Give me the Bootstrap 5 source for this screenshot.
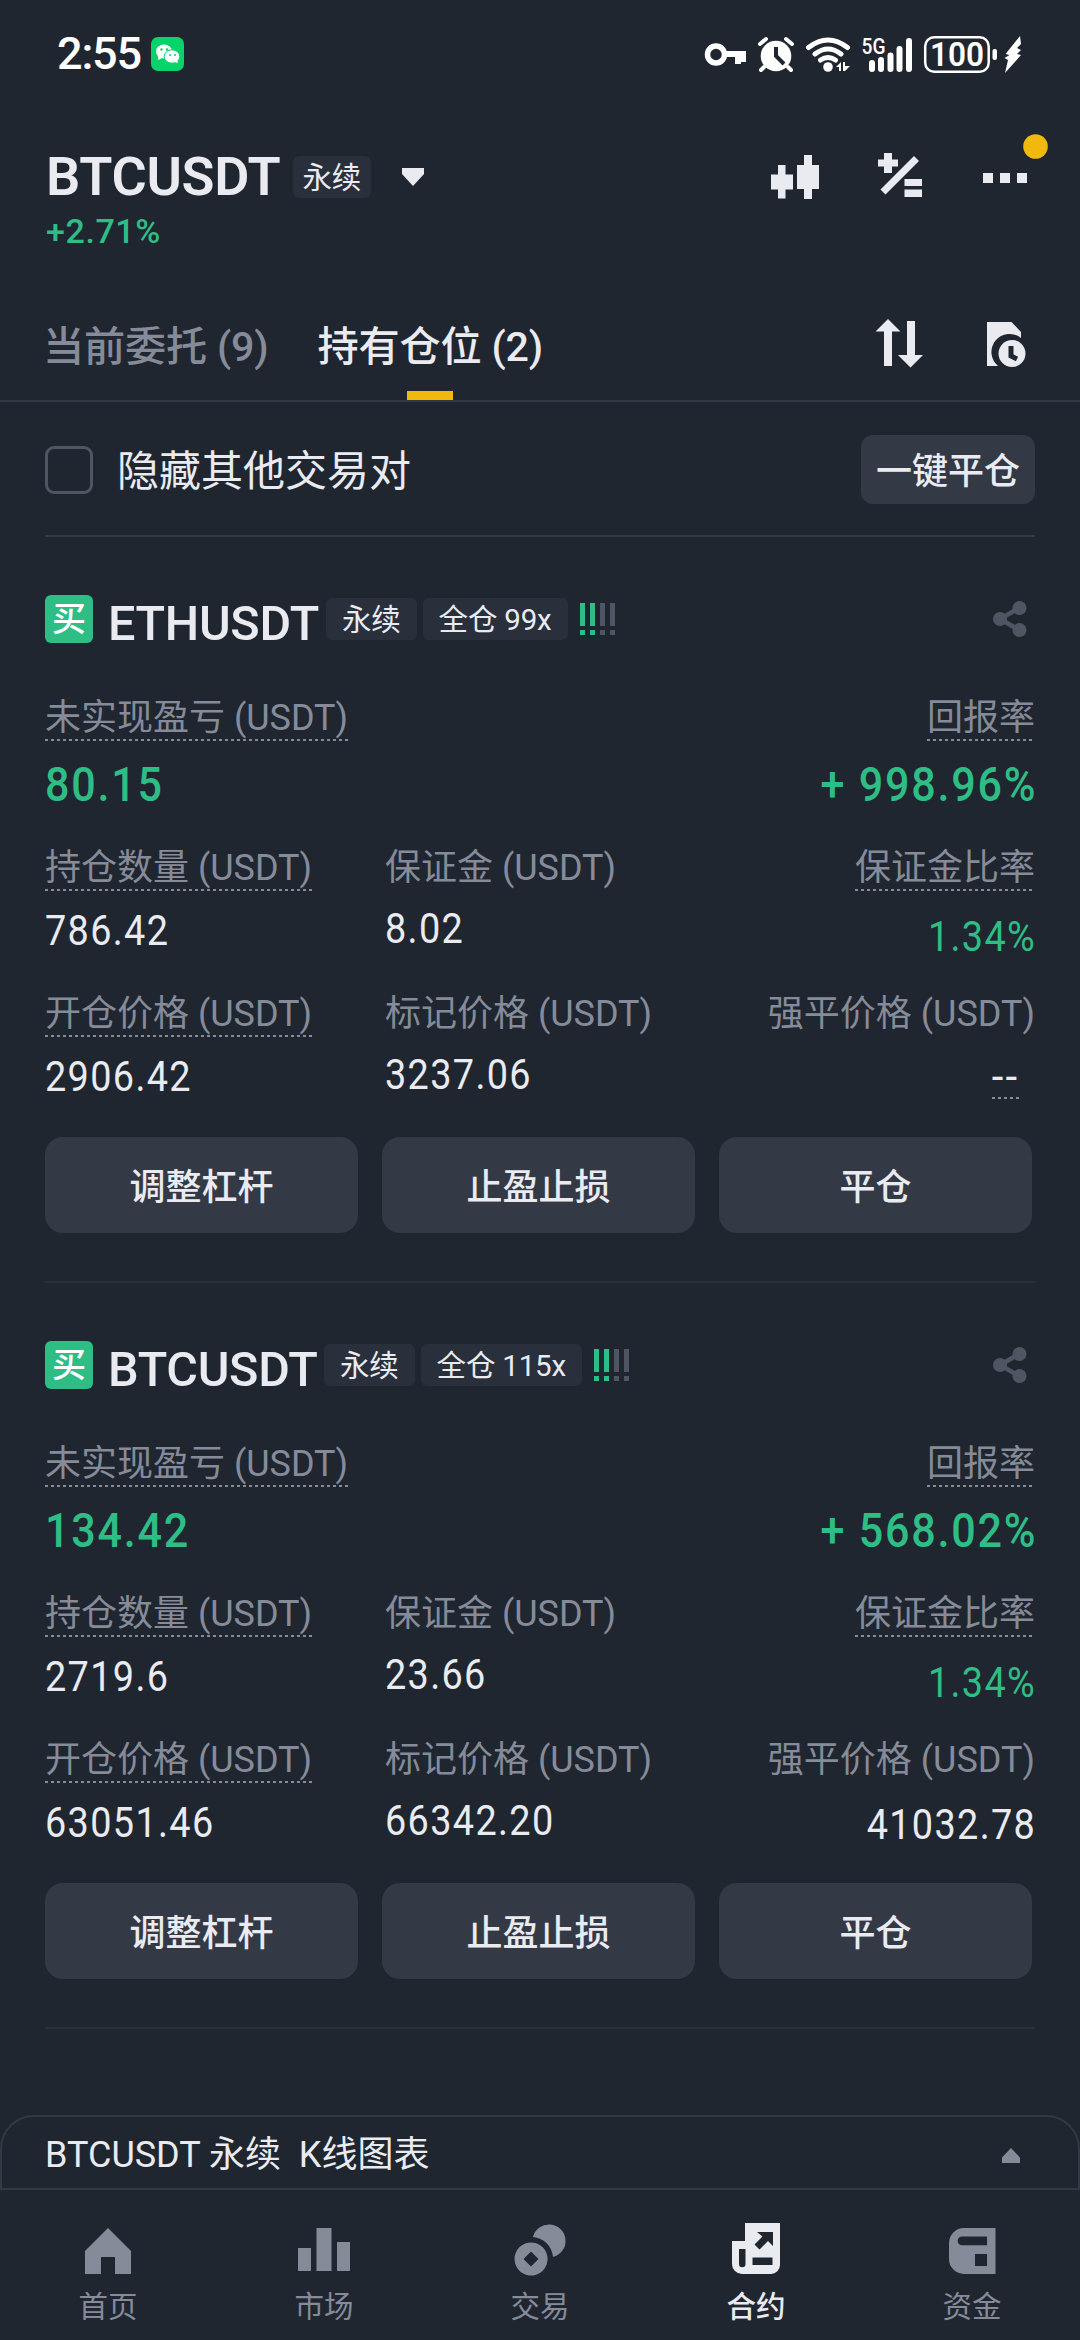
<!DOCTYPE html>
<html lang="zh-CN">
<head>
<meta charset="utf-8">
<meta name="viewport" content="width=device-width, initial-scale=1">
<title>BTCUSDT 永续</title>
<link href="https://cdn.jsdelivr.net/npm/bootstrap@5.3.0/dist/css/bootstrap.min.css" rel="stylesheet">
<style>
:root{--bg:#1f2630;--fg:#eaebf0;--dim:#868b99;--line:#333945;--mute:#4f5663;--up:#2ebd85;--gold:#f0b90b}
body{background:var(--bg);color:var(--fg);font-family:Roboto,"Noto Sans CJK SC",sans-serif;font-size:36px;line-height:1;width:1080px;height:2340px;overflow:hidden}
svg{display:block;flex:none}
.status{height:112px;padding:0 57px 4px 57px}
.clock{font-size:45px;font-weight:500;letter-spacing:-1.2px;color:#fff;line-height:52px;width:94px}
.head{height:178px;padding:35px 45px 0 46px}
.title{font-size:54px;font-weight:600;line-height:60px;letter-spacing:-.3px;width:247px}
.tagbox{background:#29303c;border-radius:6px;font-size:29.5px;height:42px;line-height:44px;padding:0 16px;white-space:pre;letter-spacing:-.2px}
.head .tagbox{padding:0 9.5px}
.pct{font-size:34px;line-height:48px;letter-spacing:.6px;font-weight:500}
.up{color:var(--up)}
.tabs{height:112px;padding:0 45px 0 43px;border-bottom:2px solid var(--line);font-size:41.2px;letter-spacing:-.2px}
.tabs .tab-item{line-height:114px;height:110px;color:var(--dim);position:relative;white-space:nowrap;font-weight:500}
.tabs .on{color:var(--fg)}
.tabs .on::after{content:"";position:absolute;left:50%;margin-left:-23px;bottom:0;width:46px;height:9px;background:var(--gold)}
.filter{margin:0 45px;height:135px;padding:33px 0 31px;border-bottom:2px solid var(--line)}
.box{width:48px;height:48px;border:3px solid var(--mute);border-radius:9px}
.soft{background:var(--line);color:var(--fg);font-size:36px;font-weight:500;border:0;padding:5px 0 0;border-radius:18px}
.all{width:174px;height:69px;border-radius:12px}
.pos{margin:0 45px;padding:58px 0 48px;height:746px;position:relative;border-bottom:2px solid #2a313b}
.side{width:48px;height:48px;background:var(--up);border-radius:6px;font-size:34px;font-weight:500;line-height:49px;text-align:center;color:#fff}
.sym{font-size:48.5px;font-weight:500;line-height:57px;height:48px;letter-spacing:-.3px;margin-left:15px}
.lab{color:var(--dim);line-height:52px;height:49px;white-space:nowrap}
.dot{background:repeating-linear-gradient(90deg,var(--dim) 0 3px,transparent 3px 6px) left bottom/100% 2px no-repeat}
.big{font-size:49px;font-weight:500;line-height:60px;margin-top:14px;letter-spacing:2px}
.big div{transform:scaleX(.88);transform-origin:0 50%}
.big div+div{transform-origin:100% 50%;margin-right:-2px}
.grid3{height:113px}
.c1{width:340px}
.val{font-size:42px;line-height:51px;height:50px;margin-top:14px;letter-spacing:1.5px;transform:scaleX(.9);transform-origin:0 50%}
.text-end .val{transform-origin:100% 50%;margin-right:-1px}
.text-end .val.nil{transform:none;height:48px;margin-right:16px;letter-spacing:2px}
.acts{gap:24px;margin-right:3px}
.acts .soft{height:96px}
.sheet{margin-top:86px;height:75px;border:2px solid var(--line);border-radius:34px 34px 0 0;padding:5px 58px 0 43px;white-space:pre}
.foot{height:150px;font-size:29.5px;color:var(--dim)}
.foot>div{width:216px;padding-top:30px}
.foot .now{color:var(--fg);font-weight:500}
.foot span{line-height:40px;margin-top:7px}
</style>
</head>
<body>
<div class="status d-flex align-items-center">
  <div class="clock">2:55</div>
  <svg width="33" height="34" viewBox="0 0 33 34"><rect width="33" height="34" rx="7" fill="#07d36a"/><ellipse cx="13" cy="14.500" rx="8" ry="7" fill="#fff"/><path d="M7 19v4l4-2z" fill="#fff"/><ellipse cx="21" cy="19.500" rx="7.800" ry="6.700" fill="#fff" stroke="#07d36a" stroke-width="1"/><path d="M26 23l1 3-4-1z" fill="#fff"/><g fill="#07d36a"><circle cx="10.500" cy="12.500" r="1.200"/><circle cx="16" cy="12.500" r="1.200"/><circle cx="19" cy="18" r="1"/><circle cx="24" cy="18" r="1"/></g></svg>
  <svg class="ms-auto" style="margin-right:-13px" width="336" height="46" viewBox="700 30 336 46" fill="#fff">
    <circle cx="716" cy="53.500" r="8.500" fill="none" stroke="#fff" stroke-width="5.500"/><path d="M726 50h20v11h-5v2h-6v-7h-9z"/>
    <circle cx="776" cy="55" r="15.300"/><path d="M764 66l-3 3M788 66l3 3M760 43l6-5M792 43l-6-5" stroke="#fff" stroke-width="4" stroke-linecap="round"/><path d="M776 46v9l8 8" fill="none" stroke="#1f2630" stroke-width="4"/>
    <g fill="none" stroke="#fff" stroke-width="5" stroke-linecap="round"><path d="M808.500 46.500q19.500-15 39 0M815 53q13-10 26 0M820.500 59q7.500-5 15 0"/></g><circle cx="828" cy="66" r="4.800"/><path d="M836 66l5-5v9h-2v-4zM843 61h2v4h5l-5 5h-2z"/>
    <text x="861.500" y="53" font-size="22.500" font-weight="500" textLength="24" lengthAdjust="spacingAndGlyphs">5G</text>
    <path d="M872 62v6M881 59v9M890.500 54.500v13.500M899.500 48v20M909 40v28" stroke="#fff" stroke-width="6" stroke-linecap="round"/>
    <rect x="925.200" y="36.200" width="63.500" height="34.500" rx="9" fill="none" stroke="#fff" stroke-width="2.500"/><text x="930" y="65" font-size="32.500" font-weight="600" textLength="54" lengthAdjust="spacingAndGlyphs">100</text><rect x="992.500" y="48" width="4.500" height="11" rx="2"/>
    <path d="M1020 35l-14.500 18 4 1-5 3 3.500 2-3 13 16-18-4-1 4-4-4-2 4-4z"/>
  </svg>
</div>

<div class="head">
  <div class="d-flex align-items-center position-relative">
    <div class="title">BTCUSDT</div><div class="tagbox">永续</div>
    <svg style="margin-left:31px" width="22" height="18" viewBox="0 0 22 18" fill="#eaebf0"><path d="M0 0h22v6L11 18 0 6z"/></svg>
    <svg class="ms-auto" width="265" height="60" viewBox="770 147 265 60" fill="#eaebf0">
      <path d="M778 165h7.500v9.500h7.500v15h-7.500v9h-7.500v-9h-7v-15h7zM804 155h8v10h7v24h-7v10h-8v-10h-7v-24h7z"/>
      <path d="M884 153h8v6.500h6v7h-6v6.500h-8v-6.500h-6v-7h6zM914 156l5 5-33.500 33.500-5-5zM904.500 179H922v7h-17.500zM904.500 189.500H922v7.500h-17.500z"/>
      <path d="M983 173h10v10h-10zM1000 173h10v10h-10zM1017 173h10v10h-10z"/>
    </svg>
    <svg class="position-absolute" style="right:-13px;top:-13px" width="25" height="25"><circle cx="12.500" cy="12.500" r="12.300" fill="#f0b90b"/></svg>
  </div>
  <div class="pct up">+2.71%</div>
</div>

<div class="tabs d-flex align-items-center">
  <div class="tab-item" style="margin-right:49px">当前委托 (9)</div><div class="tab-item on">持有仓位 (2)</div>
  <svg class="ms-auto" width="160" height="56" viewBox="875 317 160 56" fill="#eaebf0">
    <path d="M888 319l12.500 12.500H892V366h-8v-34.500h-8.500zM907 321h8v34h8l-12.500 12.500L898 355h9z"/>
    <path d="M987 322h24.500l9.500 10v6a18 18 0 0 0-23 28h-11z"/><circle cx="1012" cy="353.500" r="13.500"/><path d="M1011 346v10l6 3" fill="none" stroke="#1f2630" stroke-width="5"/>
  </svg>
</div>

<div class="filter d-flex align-items-center">
  <div class="box"></div><div style="font-size:42px;margin-left:24px;padding-top:5px">隐藏其他交易对</div>
  <button class="soft all ms-auto">一键平仓</button>
</div>

<div class="pos">
  <div class="d-flex align-items-center">
    <div class="side">买</div><div class="sym" style="width:218px">ETHUSDT</div><div class="tagbox">永续</div><div class="tagbox" style="margin-left:6px">全仓 99x</div>
    <svg style="margin-left:12px" width="36" height="32" fill="#4f5663"><path fill="#2ebd85" d="M0 0h5v23H0zM0 27h5v5H0zM10 0h5v23h-5zM10 27h5v5h-5z"/><path d="M20 0h5v23h-5zM20 27h5v5h-5zM30 0h5v23h-5zM30 27h5v5h-5z"/></svg>
    <svg class="ms-auto" style="margin-right:8px" width="34" height="36" viewBox="0 0 34 36" fill="#4f5663"><circle cx="7" cy="18" r="7"/><circle cx="26.500" cy="7" r="7"/><circle cx="26.500" cy="29" r="7"/><path d="M26 7L7 18l19 11" fill="none" stroke="#4f5663" stroke-width="4.500"/></svg>
  </div>
  <div class="d-flex justify-content-between" style="margin-top:49px"><div class="lab dot">未实现盈亏 (USDT)</div><div class="lab dot">回报率</div></div>
  <div class="big up d-flex justify-content-between"><div>80.15</div><div>+ 998.96%</div></div>
  <div class="grid3 d-flex" style="margin-top:27px">
    <div class="c1"><div class="lab dot d-inline-block align-top">持仓数量 (USDT)</div><div class="val">786.42</div></div>
    <div><div class="lab">保证金 (USDT)</div><div class="val" style="margin-top:12px">8.02</div></div>
    <div class="ms-auto text-end"><div class="lab dot">保证金比率</div><div class="val up" style="margin-top:20px">1.34%</div></div>
  </div>
  <div class="grid3 d-flex" style="margin-top:33px">
    <div class="c1"><div class="lab dot d-inline-block align-top">开仓价格 (USDT)</div><div class="val">2906.42</div></div>
    <div><div class="lab">标记价格 (USDT)</div><div class="val" style="margin-top:12px">3237.06</div></div>
    <div class="ms-auto text-end d-flex flex-column align-items-end"><div class="lab">强平价格 (USDT)</div><div class="val dot nil">--</div></div>
  </div>
  <div class="acts d-flex" style="margin-top:36px"><button class="soft flex-fill w-100">调整杠杆</button><button class="soft flex-fill w-100">止盈止损</button><button class="soft flex-fill w-100">平仓</button></div>
</div>

<div class="pos">
  <div class="d-flex align-items-center">
    <div class="side">买</div><div class="sym" style="width:216px">BTCUSDT</div><div class="tagbox">永续</div><div class="tagbox" style="margin-left:6px">全仓 115x</div>
    <svg style="margin-left:12px" width="36" height="32" fill="#4f5663"><path fill="#2ebd85" d="M0 0h5v23H0zM0 27h5v5H0zM10 0h5v23h-5zM10 27h5v5h-5z"/><path d="M20 0h5v23h-5zM20 27h5v5h-5zM30 0h5v23h-5zM30 27h5v5h-5z"/></svg>
    <svg class="ms-auto" style="margin-right:8px" width="34" height="36" viewBox="0 0 34 36" fill="#4f5663"><circle cx="7" cy="18" r="7"/><circle cx="26.500" cy="7" r="7"/><circle cx="26.500" cy="29" r="7"/><path d="M26 7L7 18l19 11" fill="none" stroke="#4f5663" stroke-width="4.500"/></svg>
  </div>
  <div class="d-flex justify-content-between" style="margin-top:49px"><div class="lab dot">未实现盈亏 (USDT)</div><div class="lab dot">回报率</div></div>
  <div class="big up d-flex justify-content-between"><div>134.42</div><div>+ 568.02%</div></div>
  <div class="grid3 d-flex" style="margin-top:27px">
    <div class="c1"><div class="lab dot d-inline-block align-top">持仓数量 (USDT)</div><div class="val">2719.6</div></div>
    <div><div class="lab">保证金 (USDT)</div><div class="val" style="margin-top:12px">23.66</div></div>
    <div class="ms-auto text-end"><div class="lab dot">保证金比率</div><div class="val up" style="margin-top:20px">1.34%</div></div>
  </div>
  <div class="grid3 d-flex" style="margin-top:33px">
    <div class="c1"><div class="lab dot d-inline-block align-top">开仓价格 (USDT)</div><div class="val">63051.46</div></div>
    <div><div class="lab">标记价格 (USDT)</div><div class="val" style="margin-top:12px">66342.20</div></div>
    <div class="ms-auto text-end"><div class="lab">强平价格 (USDT)</div><div class="val" style="margin-top:16px">41032.78</div></div>
  </div>
  <div class="acts d-flex" style="margin-top:36px"><button class="soft flex-fill w-100">调整杠杆</button><button class="soft flex-fill w-100">止盈止损</button><button class="soft flex-fill w-100">平仓</button></div>
</div>

<div class="sheet d-flex align-items-center"><div>BTCUSDT 永续  K线图表</div>
  <svg class="ms-auto" width="18" height="15" fill="#868b99"><path d="M9 0l9 9.500V15H0V9.500z"/></svg>
</div>

<div class="foot d-flex">
  <div class="d-flex flex-column align-items-center"><svg width="56" height="60" viewBox="80 2220 56 60" fill="#868b99"><path d="M108 2228l23 23v23h-16v-17h-14v17H85v-23z"/></svg><span>首页</span></div>
  <div class="d-flex flex-column align-items-center"><svg width="56" height="60" viewBox="296 2220 56 60" fill="#868b99"><path d="M298 2248h13v23h-13zM316.500 2228h15v43h-15zM337 2242h13v29h-13z"/></svg><span>市场</span></div>
  <div class="d-flex flex-column align-items-center"><svg width="56" height="60" viewBox="512 2220 56 60" fill="#868b99"><path d="M533 2237a16.500 16.500 0 1 1 20 20 22 22 0 0 0-20-20z"/><path fill-rule="evenodd" d="M531 2242.500a16.500 16.500 0 1 0 .1 0zM531 2251.500l7.500 7.500-7.500 7.500-7.500-7.500z"/></svg><span>交易</span></div>
  <div class="now d-flex flex-column align-items-center"><svg width="56" height="60" viewBox="728 2220 56 60" fill="#eaebf0"><path fill-rule="evenodd" d="M745 2223h35v42a9 9 0 0 1-9 9h-29a10 10 0 0 1-10-10v-23h13zM739 2249v15a3.200 3.200 0 0 0 6.500 0v-15zM757 2232h16v14l-5-5-8.500 8.500-5-5 8-8zM752.500 2257.500v7.500h20v-7.500z"/></svg><span>合约</span></div>
  <div class="d-flex flex-column align-items-center"><svg width="56" height="60" viewBox="944 2220 56 60" fill="#868b99"><path fill-rule="evenodd" d="M964 2228h31.500v46H964a15 15 0 0 1-15-15v-16a15 15 0 0 1 15-15zM962 2236.500a4.300 4.300 0 0 0 0 8.700h25v-8.700zM975 2254v12h12v-12z"/></svg><span>资金</span></div>
</div>
<script src="https://cdn.jsdelivr.net/npm/bootstrap@5.3.0/dist/js/bootstrap.bundle.min.js"></script>
</body>
</html>
